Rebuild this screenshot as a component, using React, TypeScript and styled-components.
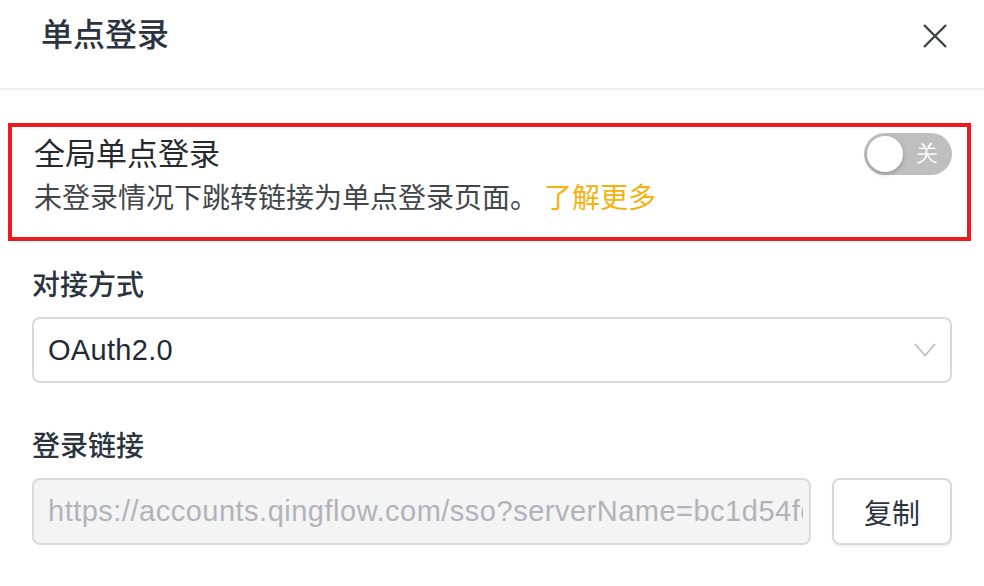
import React, { useState } from "react";
import styled, { createGlobalStyle } from "styled-components";

const GlobalStyle = createGlobalStyle`
  html, body {
    margin: 0;
    padding: 0;
    background: #ffffff;
  }
  body {
    font-family: "Liberation Sans", "Noto Sans CJK SC", sans-serif;
    -webkit-font-smoothing: antialiased;
  }
  * {
    box-sizing: border-box;
  }
`;

const Panel = styled.div`
  width: 984px;
  height: 586px;
  background: #fff;
  overflow: hidden;
`;

const Header = styled.div`
  height: 90px;
  display: flex;
  justify-content: space-between;
  align-items: flex-start;
  padding: 14px 36px 0 41px;
  border-bottom: 2px solid #efefef;
`;

const Title = styled.h1`
  margin: 0;
  font-size: 32px;
  line-height: 42px;
  font-weight: 500;
  color: #2a3340;
`;

const CloseBtn = styled.button`
  width: 26px;
  height: 26px;
  margin-top: 9px;
  padding: 0;
  border: none;
  background: transparent;
  cursor: pointer;
  display: flex;
  align-items: center;
  justify-content: center;
`;

const Body = styled.div`
  padding: 33px 32px 0 32px;
`;

// annotation frame around the global sso setting
const Highlight = styled.section`
  margin: 0 -19px 0 -24px;
  border: 4px solid #ec1a1d;
  padding: 6px 15px 16px 22px;
`;

const SettingRow = styled.div`
  display: flex;
  justify-content: space-between;
  align-items: flex-start;
`;

const SettingTitle = styled.div`
  font-size: 31px;
  line-height: 44px;
  color: #262a2f;
`;

const SettingDesc = styled.div`
  font-size: 28px;
  line-height: 44px;
  color: #41464b;
`;

const MoreLink = styled.a`
  margin-left: 6px;
  color: #f5b20f;
  text-decoration: none;
  cursor: pointer;
`;

const SwitchTrack = styled.button<{ $on: boolean }>`
  position: relative;
  width: 88px;
  height: 42px;
  padding: 0;
  border: none;
  border-radius: 21px;
  background: ${(p) => (p.$on ? "#f5b20f" : "#bfbfbf")};
  cursor: pointer;
  flex-shrink: 0;
`;

const SwitchKnob = styled.span<{ $on: boolean }>`
  position: absolute;
  top: 3px;
  left: ${(p) => (p.$on ? "49px" : "3px")};
  width: 36px;
  height: 36px;
  border-radius: 50%;
  background: #fff;
  box-shadow: 0 2px 5px rgba(0, 0, 0, 0.22);
  transition: left 0.2s;
`;

const SwitchText = styled.span<{ $on: boolean }>`
  position: absolute;
  top: 0;
  ${(p) => (p.$on ? "left: 14px;" : "right: 14px;")}
  line-height: 42px;
  font-size: 22px;
  color: #fff;
`;

const FieldLabel = styled.div<{ $top: number }>`
  margin-top: ${(p) => p.$top}px;
  margin-bottom: 11px;
  font-size: 28px;
  line-height: 40px;
  font-weight: 500;
  color: #2a3340;
`;

const SelectBox = styled.div`
  height: 66px;
  display: flex;
  align-items: center;
  justify-content: space-between;
  padding: 0 14px 0 14px;
  border: 2px solid #d9d9dc;
  border-radius: 8px;
  background: #fff;
  font-size: 29px;
  letter-spacing: 0.3px;
  color: #1f2a37;
  cursor: pointer;
`;

const LinkRow = styled.div`
  display: flex;
  gap: 21px;
`;

const LinkInput = styled.input`
  flex: 1;
  min-width: 0;
  height: 67px;
  padding: 0 6px 0 14px;
  border: 2px solid #d9d9dc;
  border-radius: 8px;
  background: #f4f4f5;
  font-family: "Liberation Sans", "Noto Sans CJK SC", sans-serif;
  font-size: 29px;
  letter-spacing: 0.5px;
  color: #b1b3b8;
  outline: none;
`;

const CopyBtn = styled.button`
  width: 120px;
  height: 67px;
  border: 2px solid #d9d9dc;
  border-radius: 8px;
  background: #fff;
  box-shadow: 0 2px 3px rgba(0, 0, 0, 0.05);
  font-family: "Liberation Sans", "Noto Sans CJK SC", sans-serif;
  font-size: 28px;
  color: #2a3340;
  cursor: pointer;
`;

const loginUrl =
  "https://accounts.qingflow.com/sso?serverName=bc1d54fc9e2a4b7d8f";

export default function App() {
  const [on, setOn] = useState(false);

  return (
    <>
      <GlobalStyle />
      <Panel>
        <Header>
          <Title>单点登录</Title>
          <CloseBtn aria-label="关闭">
            <svg width="24" height="24" viewBox="0 0 24 24">
              <path
                d="M1 1 L23 23 M23 1 L1 23"
                stroke="#3f4246"
                strokeWidth="2.4"
                fill="none"
              />
            </svg>
          </CloseBtn>
        </Header>
        <Body>
          <Highlight>
            <SettingRow>
              <SettingTitle>全局单点登录</SettingTitle>
              <SwitchTrack $on={on} onClick={() => setOn(!on)}>
                <SwitchKnob $on={on} />
                <SwitchText $on={on}>{on ? "开" : "关"}</SwitchText>
              </SwitchTrack>
            </SettingRow>
            <SettingDesc>
              未登录情况下跳转链接为单点登录页面。
              <MoreLink>了解更多</MoreLink>
            </SettingDesc>
          </Highlight>

          <FieldLabel $top={25}>对接方式</FieldLabel>
          <SelectBox>
            <span>OAuth2.0</span>
            <svg width="22" height="14" viewBox="0 0 22 14">
              <polyline
                points="1,1 11,12.5 21,1"
                stroke="#b9bbbf"
                strokeWidth="1.6"
                fill="none"
              />
            </svg>
          </SelectBox>

          <FieldLabel $top={44}>登录链接</FieldLabel>
          <LinkRow>
            <LinkInput readOnly value={loginUrl} />
            <CopyBtn>复制</CopyBtn>
          </LinkRow>
        </Body>
      </Panel>
    </>
  );
}
